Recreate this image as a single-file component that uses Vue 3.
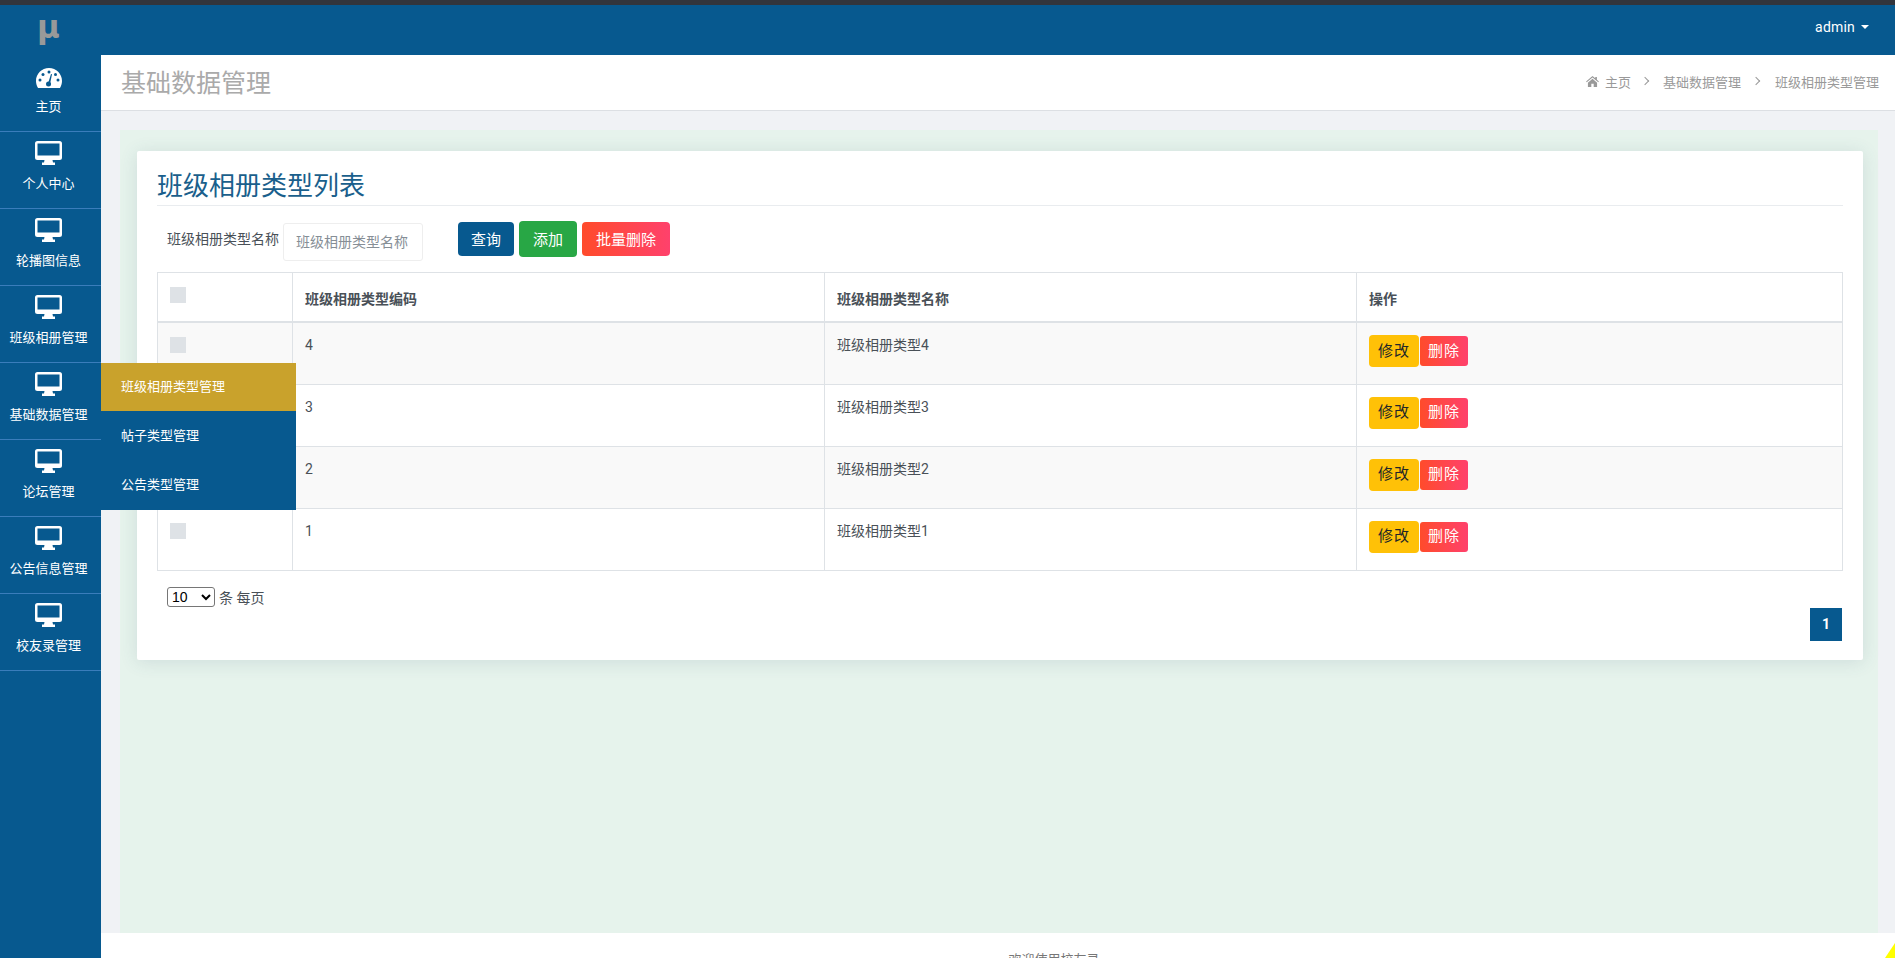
<script setup>
import { ref } from 'vue'

const menu = ref([
  { name: '主页', icon: 'gauge' },
  { name: '个人中心' },
  { name: '轮播图信息' },
  { name: '班级相册管理' },
  { name: '基础数据管理', open: true },
  { name: '论坛管理' },
  { name: '公告信息管理' },
  { name: '校友录管理' }
])

const subMenu = ['班级相册类型管理', '帖子类型管理', '公告类型管理']

const rows = ref([
  { id: 4, name: '班级相册类型4' },
  { id: 3, name: '班级相册类型3' },
  { id: 2, name: '班级相册类型2' },
  { id: 1, name: '班级相册类型1' }
])

const pageSize = ref(10)
</script>

<template>
  <div class="page">
    <div class="topline"></div>
    <header class="header">
      <div class="logo">μ</div>
      <div class="user">admin<span class="caret"></span></div>
    </header>

    <div class="layout">
      <aside class="sidebar">
        <div v-for="item in menu" :key="item.name" class="menu-item">
          <svg v-if="item.icon === 'gauge'" class="gauge" viewBox="0 0 26 20">
            <path fill="#fff" d="M13 0C5.8 0 0 5.8 0 13c0 2.500.7 4.800 1.900 6.800.2.300.5.200.8.200h20.600c.3 0 .6.100.8-.2C25.300 17.800 26 15.500 26 13 26 5.800 20.200 0 13 0z" />
            <g fill="#07598f">
              <circle cx="13" cy="4" r="1.500" />
              <circle cx="7" cy="6.500" r="1.500" />
              <circle cx="19.500" cy="6.500" r="1.500" />
              <circle cx="4" cy="12" r="1.500" />
              <circle cx="22" cy="12" r="1.500" />
              <circle cx="12.500" cy="16" r="2.500" />
              <path d="M12 15.500 15 6l1 .300-2 9.700z" />
            </g>
          </svg>
          <svg v-else class="monitor" viewBox="0 0 27 24">
            <path fill="#fff" d="M2.500 0h22A2.500 2.500 0 0 1 27 2.500v14a2.500 2.500 0 0 1-2.500 2.500h-7l.5 2.500h2V24H7v-2.500h2l.5-2.500h-7A2.500 2.500 0 0 1 0 16.500v-14A2.500 2.500 0 0 1 2.500 0zM2.500 2.500v12h22v-12z" />
          </svg>
          <span class="menu-name">{{ item.name }}</span>
          <ul v-if="item.open" class="flyout">
            <li v-for="(sub, i) in subMenu" :key="sub" :class="{ active: i === 0 }">{{ sub }}</li>
          </ul>
        </div>
      </aside>

      <main class="main">
        <div class="title-bar">
          <h1>基础数据管理</h1>
          <nav class="crumbs">
            <svg class="home" viewBox="0 0 14 12">
              <path fill="#999" d="M7 0 0 6l.7.800L7 1.500l6.300 5.300.7-.800-2.200-1.900V1h-1.800v1.500zM2 7.300V12h3.700V8.500h2.600V12H12V7.300L7 3z" />
            </svg>
            <span>主页</span>
            <i class="sep"></i>
            <span>基础数据管理</span>
            <i class="sep"></i>
            <span>班级相册类型管理</span>
          </nav>
        </div>

        <div class="panel">
          <section class="card">
            <h2>班级相册类型列表</h2>
            <div class="search">
              <label>班级相册类型名称</label>
              <input type="text" placeholder="班级相册类型名称" />
              <button class="btn btn-query">查询</button>
              <button class="btn btn-add">添加</button>
              <button class="btn btn-del">批量删除</button>
            </div>

            <table>
              <colgroup>
                <col style="width: 135px" />
                <col style="width: 532px" />
                <col style="width: 532px" />
                <col />
              </colgroup>
              <thead>
                <tr>
                  <th><span class="check"></span></th>
                  <th>班级相册类型编码</th>
                  <th>班级相册类型名称</th>
                  <th>操作</th>
                </tr>
              </thead>
              <tbody>
                <tr v-for="row in rows" :key="row.id">
                  <td><span class="check"></span></td>
                  <td>{{ row.id }}</td>
                  <td>{{ row.name }}</td>
                  <td class="actions">
                    <button class="edit">修改</button>
                    <button class="remove">删除</button>
                  </td>
                </tr>
              </tbody>
            </table>

            <div class="page-size">
              <select v-model="pageSize">
                <option :value="10">10</option>
                <option :value="20">20</option>
                <option :value="50">50</option>
              </select>
              <span>条 每页</span>
            </div>
            <div class="pager"><a>1</a></div>
          </section>
        </div>

        <footer class="footer">欢迎使用校友录</footer>
      </main>
    </div>
    <div class="corner"></div>
  </div>
</template>

<style>
html, body {
  margin: 0;
  height: 100%;
  overflow: hidden;
}
</style>

<style scoped>
.page {
  position: relative;
  height: 100vh;
  display: flex;
  flex-direction: column;
  overflow: hidden;
  font-family: Roboto, "Noto Sans CJK SC", sans-serif;
  font-size: 14px;
  color: #495057;
}

.topline {
  height: 5px;
  background: #32353c;
}

.header {
  height: 50px;
  flex: none;
  display: flex;
  align-items: center;
  justify-content: space-between;
  background: #07598f;
}

.logo {
  width: 97px;
  text-align: center;
  font-family: "DejaVu Sans", sans-serif;
  font-size: 31px;
  font-weight: bold;
  line-height: 44px;
  color: #999;
  margin-top: -6px;
}

.user {
  display: flex;
  align-items: center;
  padding-right: 26px;
  color: #fff;
  font-size: 14px;
  letter-spacing: 0.2px;
  margin-top: -6px;
}

.caret {
  margin-left: 6px;
  border-top: 4px solid #fff;
  border-left: 4px solid transparent;
  border-right: 4px solid transparent;
}

.layout {
  flex: 1;
  display: flex;
  min-height: 0;
}

.sidebar {
  width: 101px;
  flex: none;
  background: #07598f;
}

.menu-item {
  position: relative;
  height: 77px;
  box-sizing: border-box;
  padding-right: 4px;
  border-bottom: 1px solid #3a7dbb;
  display: flex;
  flex-direction: column;
  align-items: center;
  color: #fff;
  font-size: 13px;
}

.gauge {
  width: 26px;
  height: 20px;
  margin-top: 13px;
}

.monitor {
  width: 27px;
  height: 24px;
  margin-top: 9px;
}

.menu-name {
  margin-top: 9px;
  line-height: 20px;
  white-space: nowrap;
}

.flyout {
  position: absolute;
  left: 101px;
  top: 0;
  z-index: 5;
  width: 195px;
  margin: 0;
  padding: 0 0 1px;
  list-style: none;
  background: #07598f;
}

.flyout li {
  height: 49px;
  line-height: 50px;
  padding-left: 20px;
  font-size: 13px;
}

.flyout li.active {
  height: 48px;
  line-height: 48px;
  background: #c9a22c;
}

.main {
  flex: 1;
  min-width: 0;
  display: flex;
  flex-direction: column;
  background: #f0f2f5;
}

.title-bar {
  height: 52px;
  flex: none;
  display: flex;
  align-items: center;
  justify-content: space-between;
  padding: 0 16px 3px 20px;
  background: #fff;
  border-bottom: 1px solid #dcdfe3;
}

.title-bar h1 {
  margin: 0;
  font-size: 25px;
  font-weight: 400;
  color: #aaa;
}

.crumbs {
  display: flex;
  align-items: center;
  font-size: 13px;
  color: #999;
}

.home {
  width: 13px;
  height: 11px;
  margin-right: 6px;
}

.sep {
  width: 5px;
  height: 5px;
  margin: 0 16px 0 12px;
  border-top: 1px solid #999;
  border-right: 1px solid #999;
  transform: rotate(45deg);
}

.sep:first-of-type {
  margin: 0 15px 0 11px;
}

.panel {
  flex: 1;
  min-height: 0;
  margin: 19px 17px 0 19px;
  padding: 21px 15px 0 17px;
  background: #e6f3ec;
}

.card {
  box-sizing: border-box;
  height: 509px;
  padding: 20px 20px 0;
  background: #fff;
  border-radius: 2px;
  box-shadow: 0 2px 18px rgba(60, 90, 110, 0.14);
}

.card h2 {
  margin: 0;
  height: 34px;
  line-height: 30px;
  font-size: 26px;
  font-weight: 400;
  color: #1a5f8c;
  border-bottom: 1px solid #e9ecef;
}

.search {
  display: flex;
  align-items: flex-start;
  height: 39px;
  margin: 15px 0 12px;
  padding-left: 10px;
}

.search label {
  margin-top: 8px;
  line-height: 21px;
}

.search input {
  box-sizing: border-box;
  width: 140px;
  height: 38px;
  margin: 2px 35px 0 4px;
  padding: 0 12px;
  border: 1px solid #eee;
  border-radius: 3px;
  outline: none;
  font: inherit;
}

.search input::placeholder {
  color: #868e96;
  opacity: 1;
}

.btn {
  height: 34px;
  margin: 1px 5px 0 0;
  padding: 0 0 2px;
  border: 0;
  border-radius: 4px;
  color: #fff;
  font: inherit;
  font-size: 15px;
}

.btn-query {
  width: 56px;
  background: #07598f;
}

.btn-add {
  width: 58px;
  height: 36px;
  margin-top: 0;
  background: #28a745;
}

.btn-del {
  width: 88px;
  background: linear-gradient(to right, #ff4b2b, #ff416c);
}

table {
  width: 100%;
  table-layout: fixed;
  border-collapse: collapse;
}

th, td {
  padding: 12px;
  border: 1px solid #dee2e6;
  text-align: left;
  vertical-align: top;
  line-height: 21px;
}

th {
  box-sizing: border-box;
  padding: 16px 12px 11px;
  border-bottom: 2px solid #dee2e6;
  font-weight: 700;
}

th:first-child {
  padding-top: 12px;
}

td {
  height: 62px;
  box-sizing: border-box;
}

tbody tr:nth-child(odd) {
  background: #f9f9f9;
}

.check {
  display: block;
  width: 16px;
  height: 16px;
  margin-top: 2px;
  background: #dee2e6;
}

.actions {
  padding-top: 12px;
  font-size: 0;
}

.actions button {
  padding: 0;
  border: 0;
  font: inherit;
  font-size: 15px;
  vertical-align: middle;
  letter-spacing: 1px;
}

.edit {
  width: 50px;
  height: 32px;
  margin-right: 1px;
  border-radius: 4px;
  background: #ffc107;
  color: #212529;
}

.remove {
  width: 48px;
  height: 30px;
  border-radius: 3px;
  background: linear-gradient(to right, #ff4b2b, #ff416c);
  color: #fff;
}

.page-size {
  display: flex;
  align-items: center;
  margin-top: 16px;
  padding-left: 10px;
  height: 21px;
}

.page-size select {
  width: 48px;
  height: 20px;
  margin-right: 4px;
  padding: 0;
  font-family: "Liberation Sans", sans-serif;
  font-size: 14px;
  background: #fff;
  border: 1px solid #767676;
  border-radius: 3px;
}

.pager {
  display: flex;
  justify-content: flex-end;
}

.pager a {
  width: 32px;
  height: 33px;
  margin-right: 1px;
  background: #07598f;
  color: #fff;
  font-weight: 700;
  text-align: center;
  line-height: 33px;
  font-size: 14px;
}

.footer {
  height: 25px;
  box-sizing: border-box;
  flex: none;
  padding: 19px 0 0 112px;
  background: #fff;
  text-align: center;
  font-size: 13px;
  color: #777;
  line-height: 16px;
}

.corner {
  position: absolute;
  right: 0;
  bottom: 0;
  width: 10px;
  height: 15px;
  background: #ff0;
  clip-path: polygon(100% 0, 100% 100%, 0 100%);
}
</style>
